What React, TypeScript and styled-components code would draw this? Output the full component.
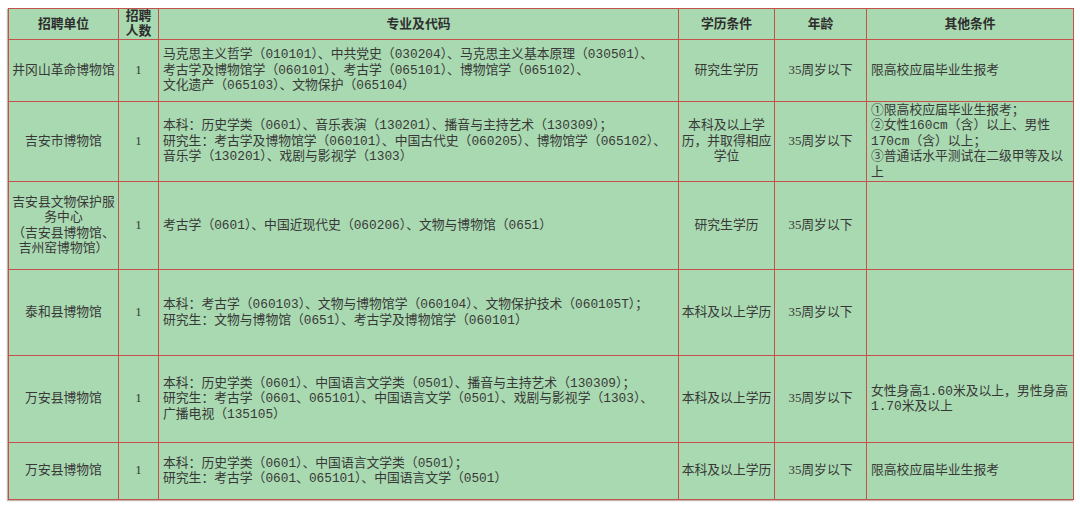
import React from "react";
import styled, { createGlobalStyle } from "styled-components";

const Global = createGlobalStyle`
  html, body { margin: 0; padding: 0; background: #ffffff; }
  body { padding: 8px; }
`;

const Table = styled.table`
  width: 1065px;
  table-layout: fixed;
  border-collapse: collapse;
  background: #a9d9b0;
  font-family: "Liberation Serif", "Noto Sans CJK SC", serif;
  font-size: 12.8px;
  color: #383838;
  box-shadow: -1px 1px 1px rgba(120, 90, 80, 0.45);
`;

const Row = styled.tr<{ $h: number }>`
  height: ${(p) => p.$h}px;
`;

const Th = styled.th`
  border: 1px solid #c4514c;
  font-weight: 700;
  color: #2e2e2e;
  text-align: center;
  vertical-align: middle;
  padding: 0;
  line-height: 15px;
`;

const Td = styled.td<{ $align?: "left" | "center"; $mono?: boolean }>`
  border: 1px solid #c4514c;
  text-align: ${(p) => p.$align ?? "center"};
  vertical-align: middle;
  padding: 0 ${(p) => (p.$align === "left" ? "4px" : "2px")};
  line-height: 15.5px;
  overflow: hidden;
  font-family: ${(p) =>
    p.$mono
      ? `"Liberation Mono", "Noto Sans CJK SC", monospace`
      : `"Liberation Serif", "Noto Sans CJK SC", serif`};
`;

const Line = styled.div`
  white-space: nowrap;
`;

type RowData = {
  h: number;
  unit: string[];
  num: string;
  major: string[];
  edu: string[];
  age: string;
  other: string[];
};

const rows: RowData[] = [
  {
    h: 62,
    unit: ["井冈山革命博物馆"],
    num: "1",
    major: [
      "马克思主义哲学（010101）、中共党史（030204）、马克思主义基本原理（030501）、",
      "考古学及博物馆学（060101）、考古学（065101）、博物馆学（065102）、",
      "文化遗产（065103）、文物保护（065104）",
    ],
    edu: ["研究生学历"],
    age: "35周岁以下",
    other: ["限高校应届毕业生报考"],
  },
  {
    h: 80,
    unit: ["吉安市博物馆"],
    num: "1",
    major: [
      "本科：历史学类（0601）、音乐表演（130201）、播音与主持艺术（130309）；",
      "研究生：考古学及博物馆学（060101）、中国古代史（060205）、博物馆学（065102）、",
      "音乐学（130201）、戏剧与影视学（1303）",
    ],
    edu: ["本科及以上学", "历，并取得相应", "学位"],
    age: "35周岁以下",
    other: [
      "①限高校应届毕业生报考；",
      "②女性160cm（含）以上、男性",
      "170cm（含）以上；",
      "③普通话水平测试在二级甲等及以",
      "上",
    ],
  },
  {
    h: 88,
    unit: ["吉安县文物保护服", "务中心", "（吉安县博物馆、", "吉州窑博物馆）"],
    num: "1",
    major: ["考古学（0601）、中国近现代史（060206）、文物与博物馆（0651）"],
    edu: ["研究生学历"],
    age: "35周岁以下",
    other: [],
  },
  {
    h: 86,
    unit: ["泰和县博物馆"],
    num: "1",
    major: [
      "本科：考古学（060103）、文物与博物馆学（060104）、文物保护技术（060105T）；",
      "研究生：文物与博物馆（0651）、考古学及博物馆学（060101）",
    ],
    edu: ["本科及以上学历"],
    age: "35周岁以下",
    other: [],
  },
  {
    h: 87,
    unit: ["万安县博物馆"],
    num: "1",
    major: [
      "本科：历史学类（0601）、中国语言文学类（0501）、播音与主持艺术（130309）；",
      "研究生：考古学（0601、065101）、中国语言文学（0501）、戏剧与影视学（1303）、",
      "广播电视（135105）",
    ],
    edu: ["本科及以上学历"],
    age: "35周岁以下",
    other: ["女性身高1.60米及以上，男性身高", "1.70米及以上"],
  },
  {
    h: 57,
    unit: ["万安县博物馆"],
    num: "1",
    major: [
      "本科：历史学类（0601）、中国语言文学类（0501）；",
      "研究生：考古学（0601、065101）、中国语言文学（0501）",
    ],
    edu: ["本科及以上学历"],
    age: "35周岁以下",
    other: ["限高校应届毕业生报考"],
  },
];

const Lines = ({ items }: { items: string[] }) => (
  <>
    {items.map((t, i) => (
      <Line key={i}>{t}</Line>
    ))}
  </>
);

export default function App() {
  return (
    <>
      <Global />
      <Table>
        <colgroup>
          <col style={{ width: 110 }} />
          <col style={{ width: 40 }} />
          <col style={{ width: 520 }} />
          <col style={{ width: 96 }} />
          <col style={{ width: 92 }} />
          <col style={{ width: 207 }} />
        </colgroup>
        <thead>
          <Row $h={30}>
            <Th>招聘单位</Th>
            <Th>
              <Line>招聘</Line>
              <Line>人数</Line>
            </Th>
            <Th>专业及代码</Th>
            <Th>学历条件</Th>
            <Th>年龄</Th>
            <Th>其他条件</Th>
          </Row>
        </thead>
        <tbody>
          {rows.map((r, i) => (
            <Row key={i} $h={r.h}>
              <Td>
                <Lines items={r.unit} />
              </Td>
              <Td>{r.num}</Td>
              <Td $align="left" $mono>
                <Lines items={r.major} />
              </Td>
              <Td>
                <Lines items={r.edu} />
              </Td>
              <Td>{r.age}</Td>
              <Td $align="left" $mono>
                <Lines items={r.other} />
              </Td>
            </Row>
          ))}
        </tbody>
      </Table>
    </>
  );
}
